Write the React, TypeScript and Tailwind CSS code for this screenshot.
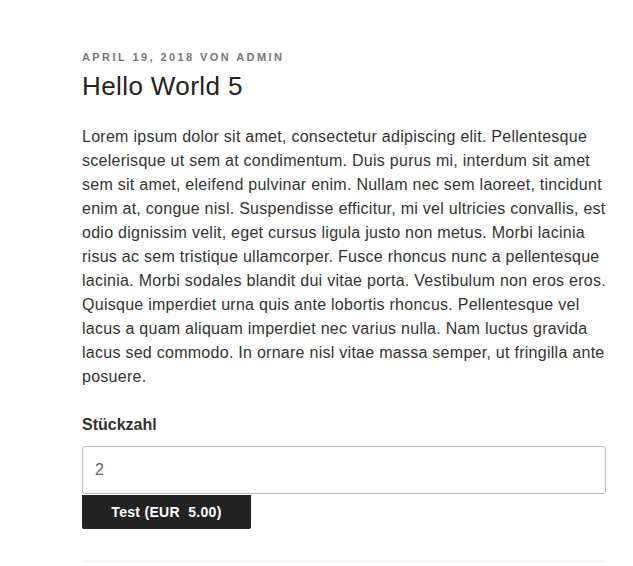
export default function App() {
  return (
    <div className="min-h-[566px] bg-white" style={{ fontFamily: '"Liberation Sans", Arial, sans-serif' }}>
      <article className="ml-[82px] w-[524px] pt-[49px]">
        <header>
          <div className="text-[11px] leading-[16.5px] font-bold uppercase tracking-[0.22em] text-[#767676]">
            April 19, 2018 von admin
          </div>
          <h1 className="mt-[2.5px] text-[26px] leading-[36px] font-light tracking-[0.4px] text-[#222]">Hello World 5</h1>
        </header>
        <div className="mt-[21px] text-[16px] leading-[24px] tracking-[0.27px] text-[#333]">
          <p>
            Lorem ipsum dolor sit amet, consectetur adipiscing elit. Pellentesque scelerisque ut sem at condimentum. Duis purus mi, interdum sit amet sem sit amet, eleifend pulvinar enim. Nullam nec sem laoreet, tincidunt enim at, congue nisl. Suspendisse efficitur, mi vel ultricies convallis, est odio dignissim velit, eget cursus ligula justo non metus. Morbi lacinia risus ac sem tristique ullamcorper. Fusce rhoncus nunc a pellentesque lacinia. Morbi sodales blandit dui vitae porta. Vestibulum non eros eros. Quisque imperdiet urna quis ante lobortis rhoncus. Pellentesque vel lacus a quam aliquam imperdiet nec varius nulla. Nam luctus gravida lacus sed commodo. In ornare nisl vitae massa semper, ut fringilla ante posuere.
          </p>
          <form className="mt-[24px]" onSubmit={(e) => e.preventDefault()}>
            <label className="block font-extrabold leading-[24px] tracking-normal text-[#333]">Stückzahl</label>
            <input
              type="text"
              defaultValue="2"
              className="mt-[9px] block h-[48px] w-full rounded-[3px] border border-[#bbb] px-[12px] text-[16px] text-[#666] outline-none"
            />
            <button
              type="submit"
              className="mt-px block h-[34px] w-[169px] rounded-b-[2px] bg-[#222] text-[14px] font-bold tracking-[0.3px] text-white"
            >
              Test (EUR&nbsp; 5.00)
            </button>
          </form>
        </div>
        <div className="mt-[32px] border-t border-[#eee]" />
      </article>
    </div>
  );
}
